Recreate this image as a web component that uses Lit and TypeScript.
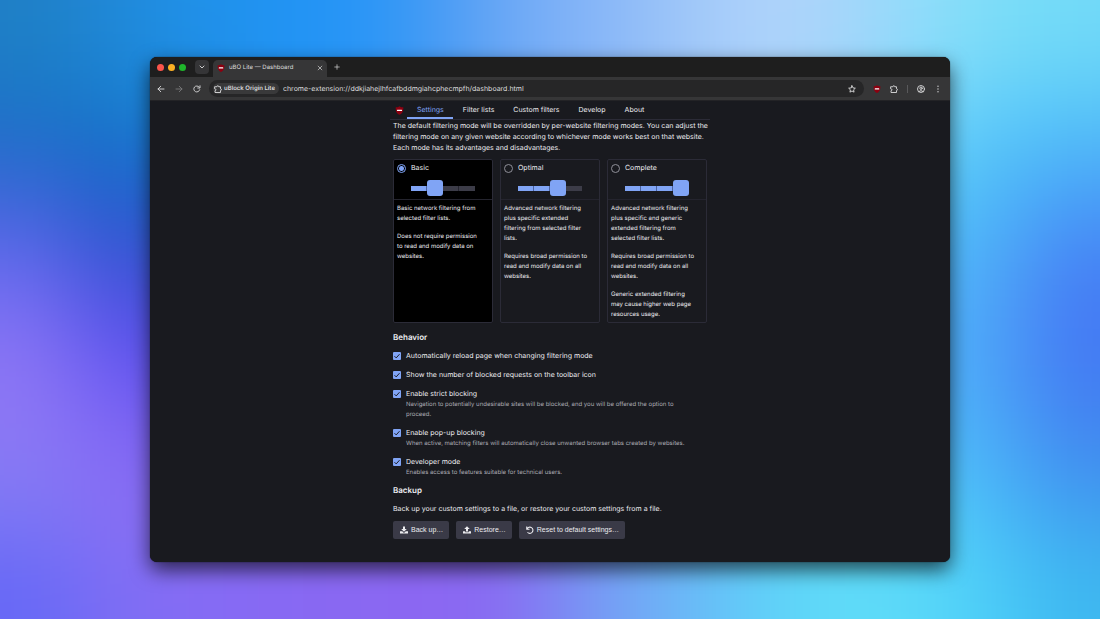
import { LitElement, html, css, svg } from "lit";
import { customElement, property, state } from "lit/decorators.js";
import { classMap } from "lit/directives/class-map.js";

const shield = html`<svg class="shield" viewBox="4 0 56 64" aria-hidden="true">
  <path d="M32 1C25 7 14 9 5 9c0 27 3 41 27 54C56 50 59 36 59 9 50 9 39 7 32 1Z" fill="#8c0010" />
  <rect x="14" y="26" width="36" height="10" rx="3" fill="#fff" />
</svg>`;

const line = (body: unknown, cls = "") => html`<svg
  class="glyph ${cls}" viewBox="0 0 16 16" fill="none" stroke="currentColor"
  stroke-width="1.8" stroke-linecap="round" stroke-linejoin="round" aria-hidden="true">${body}</svg>`;

const puzzle = svg`<path d="M2 3.500h3.600a2 2 0 0 1 4 0H13v4a1.800 1.800 0 0 1 0 3.600V15H2v-3.600a1.900 1.900 0 0 0 0-3.800Z" />`;

@customElement("mode-card")
class ModeCard extends LitElement {
  @property() label = "";
  @property({ type: Number }) level = 1;
  @property({ type: Boolean, reflect: true }) selected = false;
  @property({ attribute: false }) notes: string[] = [];

  static styles = css`
    :host { display: block; min-width: 0; border: 1px solid #2b2b37; border-radius: 2px; box-sizing: border-box; }
    :host([selected]) { background: #000; }
    .head { border-bottom: 1px solid #24242e; padding: 3px; }
    .title { display: flex; align-items: center; gap: 5px; line-height: 10px; }
    .radio {
      appearance: none; box-sizing: border-box; width: 9px; height: 9px; margin: 0;
      border: 1px solid #8f8f98; border-radius: 50%;
    }
    .radio:checked { border-color: #80a4f5; background: radial-gradient(circle, #80a4f5 0 2px, transparent 3px); }
    .meter { display: flex; align-items: center; justify-content: center; height: 16px; margin-top: 7px; }
    .seg { width: 16px; height: 5px; background: #3c3c48; box-sizing: border-box; border-right: 1px solid #24242e; }
    .seg.on { background: #80a4f5; border-color: #4a62a0; }
    .seg:last-child { border-right: 0; }
    .thumb { width: 16px; height: 16px; border-radius: 3px; background: #80a4f5; }
    .notes { display: flex; flex-direction: column; gap: 8px; padding: 4px 10px 2px 3px; font-size: 6px; line-height: 10px; }
    p { margin: 0; }
  `;

  render() {
    return html`<div class="head">
        <label class="title"><input class="radio" type="radio" name="mode" .checked=${this.selected}
          @click=${() => this.dispatchEvent(new CustomEvent("pick"))} />${this.label}</label>
        <div class="meter">
          ${[0, 1, 2, 3].map((i) => i === this.level
            ? html`<span class="thumb"></span>`
            : html`<span class=${classMap({ seg: true, on: i < this.level })}></span>`)}
        </div>
      </div>
      <div class="notes">${this.notes.map((n) => html`<p>${n}</p>`)}</div>`;
  }
}

const modes = [
  { label: "Basic", level: 1, notes: ["Basic network filtering from selected filter lists.", "Does not require permission to read and modify data on websites."] },
  { label: "Optimal", level: 2, notes: ["Advanced network filtering plus specific extended filtering from selected filter lists.", "Requires broad permission to read and modify data on all websites."] },
  { label: "Complete", level: 3, notes: ["Advanced network filtering plus specific and generic extended filtering from selected filter lists.", "Requires broad permission to read and modify data on all websites.", "Generic extended filtering may cause higher web page resources usage."] },
];

const options = [
  { label: "Automatically reload page when changing filtering mode" },
  { label: "Show the number of blocked requests on the toolbar icon" },
  { label: "Enable strict blocking", note: "Navigation to potentially undesirable sites will be blocked, and you will be offered the option to proceed." },
  { label: "Enable pop-up blocking", note: "When active, matching filters will automatically close unwanted browser tabs created by websites." },
  { label: "Developer mode", note: "Enables access to features suitable for technical users." },
];

@customElement("ubo-dashboard")
class UboDashboard extends LitElement {
  @state() private mode = "Basic";

  static styles = css`
    :host { display: block; color: #ececf0; font-size: 7px; line-height: 10px; }
    .nav, .body { max-width: 320px; margin: 0 auto; box-sizing: border-box; }
    .nav { display: flex; align-items: center; padding-left: 5px; border-bottom: 1px solid #2b2b37; }
    .shield { display: block; width: 9px; height: 9px; margin-right: 3px; }
    .nav a { padding: 4px 9px 2px 10px; border-bottom: 2px solid transparent; color: inherit; text-decoration: none; }
    .nav a.active { color: #80a4f5; border-color: #80a4f5; }
    .body { padding: 0 3px; }
    p { margin: 0; }
    .intro { line-height: 11px; margin-right: -3px; }
    .modes { display: grid; grid-template-columns: repeat(3, minmax(0, 1fr)); gap: 7px; margin-top: 6px; }
    h3 { margin: 0; font-size: 8px; font-weight: 600; line-height: 12px; }
    .behavior { padding-top: 8px; }
    .options { display: flex; flex-direction: column; gap: 6px; margin-top: 6px; }
    .option { display: flex; align-items: center; gap: 5px; line-height: 13px; }
    .check {
      appearance: none; width: 8px; height: 8px; margin: 0; border-radius: 1px; border: 0; background: #3c3c48;
    }
    .check:checked {
      background: #80a4f5 url("data:image/svg+xml,%3Csvg xmlns='http://www.w3.org/2000/svg' viewBox='0 0 8 8'%3E%3Cpath d='M1.5 4.2l1.7 1.7 3.3-3.7' fill='none' stroke='%231b1b22' stroke-width='1'/%3E%3C/svg%3E");
    }
    .note { padding: 0 16px 0 13px; color: #acacb4; font-size: 6px; }
    .backup { padding-top: 6px; }
    .backup p { margin-top: 8px; }
    .actions { display: flex; flex-wrap: wrap; gap: 7px; margin-top: 7px; }
    .actions button {
      display: flex; align-items: center; gap: 3px; height: 18px; padding: 0 6px 0 7px; border: 0; border-radius: 2px;
      background: #3a3a47; color: #ececf0; font: 7px/10px "Liberation Sans", sans-serif;
    }
    .actions svg { width: 8px; height: 8px; }
  `;

  render() {
    return html`
      <nav class="nav">
        ${shield}
        ${["Settings", "Filter lists", "Custom filters", "Develop", "About"].map(
          (t, i) => html`<a href="#" class=${classMap({ active: i === 0 })}>${t}</a>`)}
      </nav>
      <div class="body">
        <p class="intro">The default filtering mode will be overridden by per-website filtering modes. You can adjust the
          filtering mode on any given website according to whichever mode works best on that website. Each mode
          has its advantages and disadvantages.</p>
        <div class="modes">
          ${modes.map((m) => html`<mode-card .label=${m.label} .level=${m.level} .notes=${m.notes}
            .selected=${m.label === this.mode} @pick=${() => (this.mode = m.label)}></mode-card>`)}
        </div>
        <section class="behavior">
          <h3>Behavior</h3>
          <div class="options">
            ${options.map((o) => html`<div>
              <label class="option"><input class="check" type="checkbox" checked />${o.label}</label>
              ${o.note ? html`<p class="note">${o.note}</p>` : null}
            </div>`)}
          </div>
        </section>
        <section class="backup">
          <h3>Backup</h3>
          <p>Back up your custom settings to a file, or restore your custom settings from a file.</p>
          <div class="actions">
            <button type="button"><svg viewBox="0 0 16 16" fill="currentColor" aria-hidden="true"><path d="M6 1h4v5h3.500L8 11.500 2.500 6H6ZM0 10.500h4.500L8 14l3.500-3.500H16V15H0Z" /></svg>Back up…</button>
            <button type="button"><svg viewBox="0 0 16 16" fill="currentColor" aria-hidden="true"><path d="M6 11V6H2.500L8 .5 13.500 6H10v5ZM0 10.500h4.500V12.500h7V10.500H16V15H0Z" /></svg>Restore…</button>
            <button type="button"><svg viewBox="0 0 16 16" fill="none" stroke="currentColor" stroke-width="2.200" aria-hidden="true"><path d="M1.500 1v5.500H7M2 6a6.200 6.200 0 1 1 1 6.500" /></svg>Reset to default settings…</button>
          </div>
        </section>
      </div>`;
  }
}

/* Wallpaper: bands of colour from top to bottom, softened together by one blur. */
const bands: string[][] = [
  "1f80c6 2088d6 2090e6 2092ee 2294f6 2c96f6 4c9cf4 70aaf6 84b4f8 96c0f8 a8cefa b0d4fa a2d6fa 8edefa 7cdef8 72daf8",
  "1a72c6 1478c8 1a80d0 2092ee 2294f6 2c96f6 4c9cf4 70aaf6 84b4f8 96c0f8 a8cefa a8d4fa 94d4fa 70d4f8 5cccfa 54c4f8",
  "3a66d6 1f5fca 2062cc 2062cc 2062cc 2062cc 2062cc 2062cc 58c8f8 58c8f8 58c8f8 58c8f8 58c8f8 58c8f8 4ab8f8 48a0f8",
  "686af0 4052d8 3f52d4 3f52d4 3f52d4 3f52d4 3f52d4 3f52d4 50b8f8 50b8f8 50b8f8 50b8f8 50b8f8 50b8f8 4ea8f8 467ef4",
  "8a74f4 6458f2 584cec 584cec 584cec 584cec 584cec 584cec 50b4f8 50b4f8 50b4f8 50b4f8 50b4f8 50b4f8 4c9ef8 4478f4",
  "8e78f4 8068f4 7a60f2 7a60f2 7a60f2 7a60f2 7a60f2 7a60f2 50b8f8 50b8f8 50b8f8 50b8f8 50b8f8 50b8f8 4aa8f8 4284f0",
  "807af4 8a70f4 8a6cf2 866af4 8868f2 8a68f2 8c66f2 8670f2 7896f4 70aef6 64c4f8 5ed6f8 5cd8f8 54ccf8 48b8f8 409cf0",
  "6668f6 7a6ef4 846cf4 866af4 8868f2 8a68f2 8c66f2 8670f2 7896f4 70aef6 64c4f8 5ed6f8 60dcf8 58d8f8 4accf8 3eb8f0",
].map((row) => row.split(" "));

const wallpaper = html`<svg class="wallpaper" viewBox="0 0 160 80" preserveAspectRatio="none" aria-hidden="true">
  <filter id="soft" filterUnits="userSpaceOnUse" x="-30" y="-30" width="220" height="140" color-interpolation-filters="sRGB">
    <feGaussianBlur stdDeviation="6" />
  </filter>
  <g filter="url(#soft)">
    ${bands.map((row, r) => row.map((fill, c) => {
      const x0 = c === 0 ? -30 : c * 10;
      const y0 = r === 0 ? -30 : r * 10;
      const x1 = c === 15 ? 190 : c * 10 + 11;
      const y1 = r === 7 ? 110 : r * 10 + 11;
      return svg`<rect x=${x0} y=${y0} width=${x1 - x0} height=${y1 - y0} fill="#${fill}" />`;
    }))}
  </g>
</svg>`;

@customElement("app-root")
class AppRoot extends LitElement {
  static styles = css`
    :host {
      display: grid; grid-template: minmax(100vh, auto) / minmax(0, 1fr);
      font-family: Inter, "Liberation Sans", sans-serif; text-rendering: geometricPrecision;
    }
    .wallpaper { grid-area: 1 / 1; width: 100%; height: 100%; contain: size; overflow: hidden; }
    .window {
      grid-area: 1 / 1; margin: 57px 150px; z-index: 1;
      display: flex; flex-direction: column; min-width: 0; overflow: hidden; border-radius: 7px;
      background: #191a1f; box-shadow: 0 0 1px #000, 0 8px 20px #000a;
    }
    .tabs { display: flex; align-items: flex-end; height: 20px; padding-left: 7px; background: #1e1e1e; color: #dcdcdc; }
    .lights { display: flex; gap: 4px; align-self: center; }
    .light { width: 7px; height: 7px; padding: 0; border: 0; border-radius: 50%; }
    .red { background: #fb544b; }
    .yellow { background: #fcb024; }
    .green { background: #1fb52b; }
    button { font: inherit; color: inherit; }
    .search, .icon { display: grid; place-items: center; padding: 0; border: 0; background: none; }
    .search { width: 14px; height: 14px; margin: 0 4px 0 9px; align-self: center; border-radius: 4px; background: #353537; }
    .tab {
      display: flex; align-items: center; gap: 4px; width: 114px; height: 17px; box-sizing: border-box; padding: 0 4px 2px;
      border-radius: 5px 5px 0 0; background: #363637; font-size: 6px;
    }
    .tab .name { flex: 1; }
    .glyph { display: block; width: 8px; height: 8px; }
    .small { width: 6px; height: 6px; }
    .shield { display: block; width: 8px; height: 8px; }
    .new { align-self: center; margin-left: 7px; }
    .bar { display: flex; align-items: center; height: 23px; padding: 0 8px 0 7px; background: #363637; color: #dcdcde; }
    .history { display: flex; gap: 10px; margin-right: 8px; }
    .dim { color: #7a7a7c; }
    .address {
      display: flex; flex: 1; align-items: center; gap: 4px; height: 17px; padding: 0 8px 0 4px; min-width: 0;
      border-radius: 9px; background: #262627;
    }
    .chip {
      display: flex; align-items: center; gap: 2px; height: 11px; padding: 0 4px 0 1px; border-radius: 6px;
      background: #39393a; font-size: 6px; font-weight: 600;
    }
    .address input {
      flex: 1; min-width: 0; padding: 0; border: 0; outline: 0; background: none; color: #dcdcde;
      font: 7px/11px Inter, sans-serif; text-rendering: inherit;
    }
    .ext { display: flex; align-items: center; gap: 9px; margin-left: 9px; }
    .sep { width: 1px; height: 8px; background: #59595b; }
    .page { flex: 1; border-top: 1px solid #232326; }
  `;

  render() {
    return html`${wallpaper}<div class="window">
      <div class="tabs">
        <div class="lights">
          <button class="light red" aria-label="Close window"></button>
          <button class="light yellow" aria-label="Minimize"></button>
          <button class="light green" aria-label="Zoom"></button>
        </div>
        <button class="search" aria-label="Search tabs">${line(svg`<path d="M4 6l4 4 4-4" />`)}</button>
        <div class="tab">
          ${shield}<span class="name">uBO Lite — Dashboard</span>
          <button class="icon" aria-label="Close tab">${line(svg`<path d="M3 3l10 10M13 3L3 13" />`, "small")}</button>
        </div>
        <button class="icon new" aria-label="New tab">${line(svg`<path d="M8 2v12M2 8h12" />`, "small")}</button>
      </div>
      <div class="bar">
        <div class="history">
          <button class="icon" aria-label="Back">${line(svg`<path d="M14 8H2M7.500 2.500L2 8l5.500 5.500" />`)}</button>
          <button class="icon dim" aria-label="Forward">${line(svg`<path d="M2 8h12M8.500 2.500L14 8l-5.500 5.500" />`)}</button>
          <button class="icon" aria-label="Reload">${line(svg`<path d="M13.500 9.500a6 6 0 1 1-1.200-5.500M14 1.500v4.500H9.500" />`)}</button>
        </div>
        <div class="address">
          <span class="chip">${line(puzzle)}uBlock Origin Lite</span>
          <input type="text" aria-label="Address" value="chrome-extension://ddkjiahejlhfcafbddmgiahcphecmpfh/dashboard.html" />
          <button class="icon" aria-label="Bookmark">${line(svg`<path d="M8 1.500l2 4.300 4.700.6-3.500 3.200.9 4.700L8 12l-4.100 2.300.9-4.700L1.300 6.400 6 5.800Z" />`)}</button>
        </div>
        <div class="ext">
          <button class="icon" aria-label="uBO Lite">${shield}</button>
          <button class="icon" aria-label="Extensions">${line(puzzle)}</button>
          <span class="sep"></span>
          <button class="icon" aria-label="Profile">${line(svg`<circle cx="8" cy="8" r="7" /><circle cx="8" cy="6.500" r="2.400" /><path d="M3.500 13q4.500-4 9 0" />`)}</button>
          <button class="icon" aria-label="Menu">${line(svg`<path d="M8 2.500v.1M8 8v.1M8 13.500v.1" stroke-width="2.600" />`)}</button>
        </div>
      </div>
      <main class="page"><ubo-dashboard></ubo-dashboard></main>
    </div>`;
  }
}
